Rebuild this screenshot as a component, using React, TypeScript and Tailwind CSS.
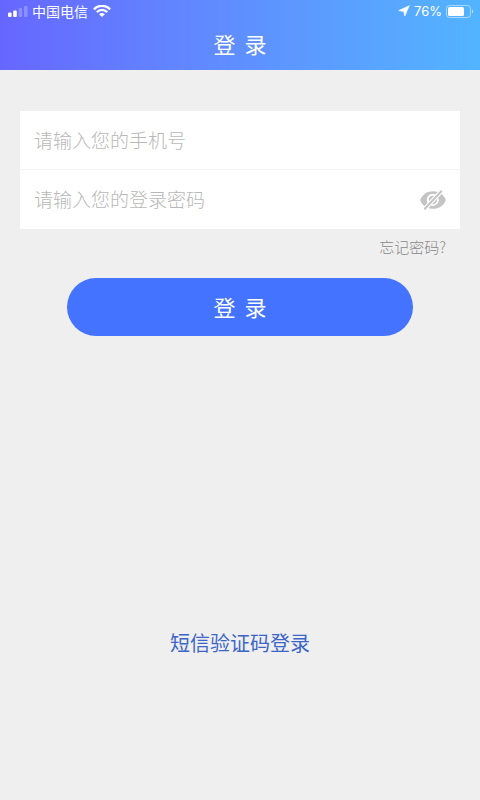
import React, { useState } from 'react';
import clsx from 'clsx';

function SignalIcon() {
  return (
    <svg width="20" height="11" viewBox="0 0 20 11" fill="#fff" aria-hidden="true">
      <rect x="0" y="6.5" width="3.6" height="4.5" rx="1" />
      <rect x="5.2" y="4.5" width="3.6" height="6.5" rx="1" />
      <rect x="10.6" y="2" width="3.6" height="9" rx="1" opacity="0.25" />
      <rect x="16" y="0" width="3.6" height="11" rx="1" opacity="0.25" />
    </svg>
  );
}

function WifiIcon() {
  return (
    <svg width="18" height="12" viewBox="0 0 18 12" fill="none" stroke="#fff" aria-hidden="true">
      <path d="M0.9 4.4C5.5 -0.4 12.5 -0.4 17.1 4.4" strokeWidth="2.4" />
      <path d="M3.8 7.1C6.8 4.1 11.2 4.1 14.2 7.1" strokeWidth="2.2" />
      <path d="M6.1 9.2C7.8 7.5 10.2 7.5 11.9 9.2L9 12Z" fill="#fff" stroke="none" />
    </svg>
  );
}

function LocationIcon() {
  return (
    <svg width="12" height="12" viewBox="0 0 12 12" fill="#fff" stroke="#fff" strokeWidth="0.6" strokeLinejoin="round" aria-hidden="true">
      <path d="M11.3 0.7L6.8 11L5.7 6.5L0.7 5.6Z" />
    </svg>
  );
}

function BatteryIcon() {
  return (
    <svg width="28" height="13" viewBox="0 0 28 13" fill="none" aria-hidden="true">
      <rect x="0.5" y="0.5" width="24" height="12" rx="3" stroke="#fff" strokeOpacity="0.5" />
      <rect x="2" y="2" width="16" height="9" rx="1.5" fill="#fff" />
      <path d="M26 4.5C27.6 5.2 27.6 7.8 26 8.5Z" fill="#fff" fillOpacity="0.6" />
    </svg>
  );
}

function EyeOffIcon() {
  return (
    <svg width="26" height="20" viewBox="0 0 26 20" fill="none" aria-hidden="true">
      <path d="M0.2 10C2 4.6 7 1.2 13 1.2S24 4.6 25.8 10C24 15.4 19 18.8 13 18.8S2 15.4 0.2 10Z" fill="#c4c4c4" />
      <path d="M9.4 13.6A5 5 0 0 1 16.2 6.1" stroke="#fff" strokeWidth="2" />
      <path d="M17.6 8.2A5 5 0 0 1 11.2 14.7" stroke="#fff" strokeWidth="1.6" />
      <path d="M4.2 19.4L22 0.6" stroke="#fff" strokeWidth="4.4" />
      <path d="M4.4 19.2L21.8 0.8" stroke="#c4c4c4" strokeWidth="2" />
    </svg>
  );
}

const inputClass =
  'w-full min-w-0 flex-1 bg-transparent text-[19px] font-light text-[#333] outline-none placeholder:text-[#b8b8b8]';

export default function App() {
  const [phone, setPhone] = useState('');
  const [password, setPassword] = useState('');
  const [visible, setVisible] = useState(false);

  return (
    <div className="flex min-h-screen flex-col bg-[#efefef] font-['Noto_Sans_CJK_SC',sans-serif]">
      <header className="bg-linear-to-r from-[#6666ff] to-[#52b4ff] pb-[11px] text-white">
        <div className="flex h-[22px] items-center justify-between pr-[6px] pl-2">
          <div className="flex items-center gap-1">
            <SignalIcon />
            <span className="text-[14px] leading-5">中国电信</span>
            <span className="pl-px"><WifiIcon /></span>
          </div>
          <div className="flex items-center gap-1 font-['Inter',sans-serif]">
            <LocationIcon />
            <span className="text-[13px] leading-5">76%</span>
            <BatteryIcon />
          </div>
        </div>
        <h1 className="pt-[5px] text-center text-[22px] leading-8">
          登 <span className="ml-1">录</span>
        </h1>
      </header>

      <form className="flex flex-col px-5 pt-[41px]" onSubmit={(e) => e.preventDefault()}>
        <div className="bg-white">
          <div className="flex h-[59px] items-center border-b border-[#f5f5f5] px-[14px]">
            <input
              type="tel"
              aria-label="请输入您的手机号"
              placeholder="请输入您的手机号"
              value={phone}
              onChange={(e) => setPhone(e.target.value)}
              className={inputClass}
            />
          </div>
          <div className="flex h-[59px] items-center px-[14px]">
            <input
              type={visible ? 'text' : 'password'}
              aria-label="请输入您的登录密码"
              placeholder="请输入您的登录密码"
              value={password}
              onChange={(e) => setPassword(e.target.value)}
              className={inputClass}
            />
            <button
              type="button"
              aria-label="显示密码"
              aria-pressed={visible}
              onClick={() => setVisible(!visible)}
              className={clsx('shrink-0', visible && 'opacity-60')}
            >
              <EyeOffIcon />
            </button>
          </div>
        </div>
        <a href="#forgot" className="mt-2 mr-[14px] self-end text-[15px] leading-5 font-light text-[#888]">
          忘记密码?
        </a>
        <button
          type="submit"
          className="mx-[47px] mt-[21px] h-[58px] rounded-full bg-[#4474ff] pb-0.5 text-[22px] text-white"
        >
          登 <span className="ml-1">录</span>
        </button>
      </form>

      <a href="#sms" className="mt-auto mb-[141px] self-center text-[20px] leading-8 text-[#3b66c8]">
        短信验证码登录
      </a>
    </div>
  );
}
